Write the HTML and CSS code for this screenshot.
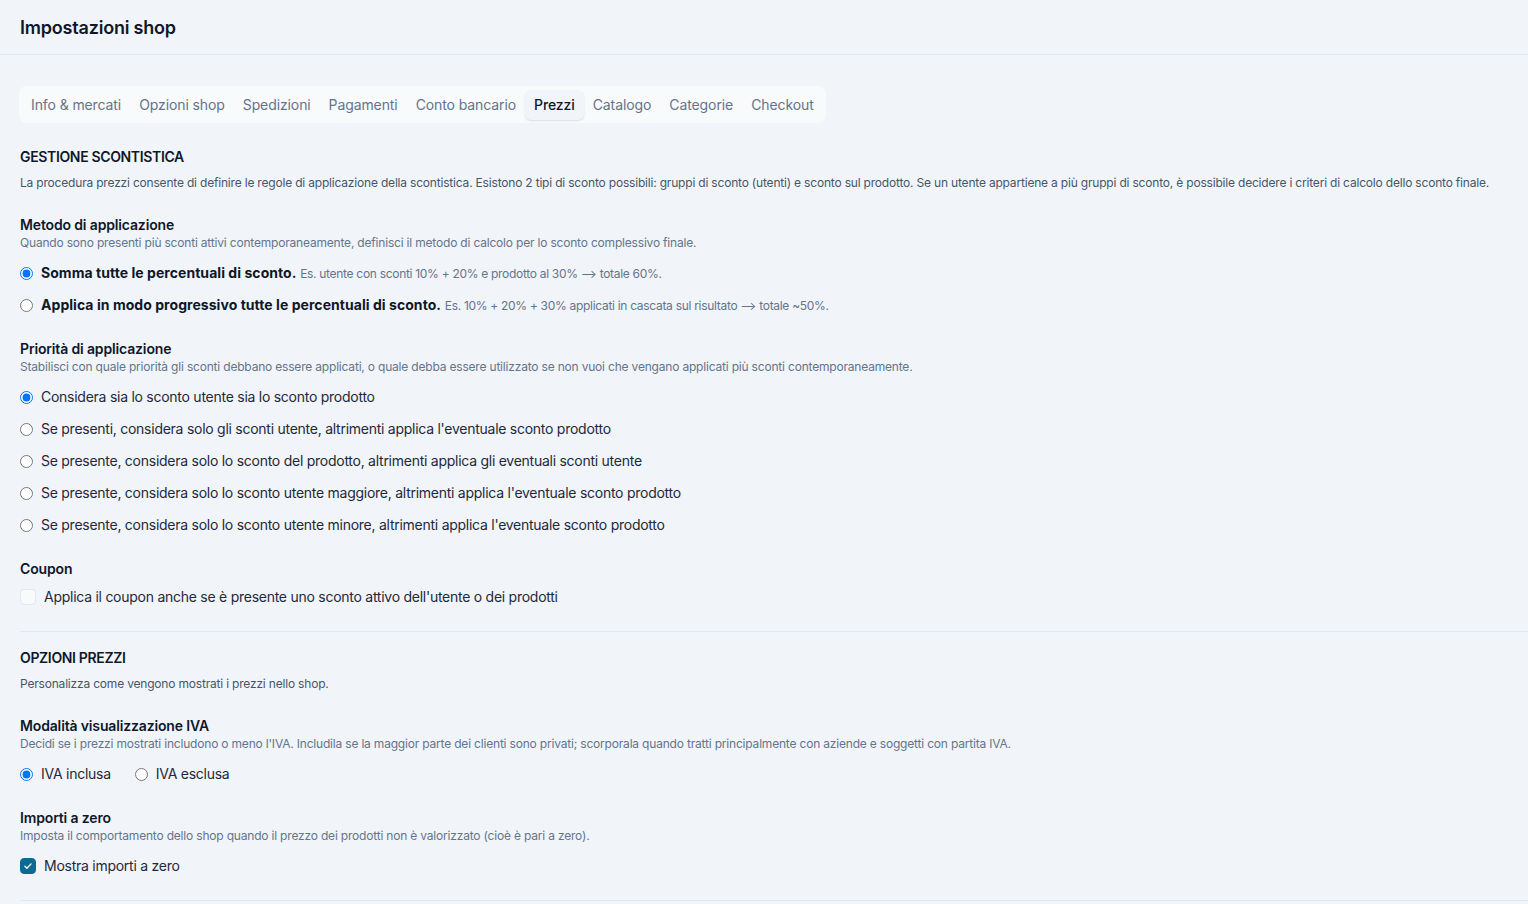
FILE: index.html
```html
<!DOCTYPE html>
<html lang="it">
<head>
<meta charset="utf-8">
<title>Impostazioni shop</title>
<link rel="stylesheet" href="styles.css">
</head>
<body>
<header class="page-header">
  <h1 class="page-title">Impostazioni shop</h1>
</header>
<main class="content">
  <nav class="tabs">
    <span class="tab">Info &amp; mercati</span>
    <span class="tab">Opzioni shop</span>
    <span class="tab">Spedizioni</span>
    <span class="tab">Pagamenti</span>
    <span class="tab">Conto bancario</span>
    <span class="tab tab-active">Prezzi</span>
    <span class="tab">Catalogo</span>
    <span class="tab">Categorie</span>
    <span class="tab">Checkout</span>
  </nav>

  <section class="section">
    <h2 class="section-title">GESTIONE SCONTISTICA</h2>
    <p class="section-desc">La procedura prezzi consente di definire le regole di applicazione della scontistica. Esistono 2 tipi di sconto possibili: gruppi di sconto (utenti) e sconto sul prodotto. Se un utente appartiene a più gruppi di sconto, è possibile decidere i criteri di calcolo dello sconto finale.</p>

    <div class="field">
      <h3 class="field-title">Metodo di applicazione</h3>
      <p class="field-desc">Quando sono presenti più sconti attivi contemporaneamente, definisci il metodo di calcolo per lo sconto complessivo finale.</p>
      <div class="options">
        <label class="option"><input type="radio" name="metodo" checked><span><b>Somma tutte le percentuali di sconto.</b> <small class="hint">Es. utente con sconti 10% + 20% e prodotto al 30% ⟶ totale 60%.</small></span></label>
        <label class="option"><input type="radio" name="metodo"><span><b>Applica in modo progressivo tutte le percentuali di sconto.</b> <small class="hint">Es. 10% + 20% + 30% applicati in cascata sul risultato ⟶ totale ~50%.</small></span></label>
      </div>
    </div>

    <div class="field">
      <h3 class="field-title">Priorità di applicazione</h3>
      <p class="field-desc">Stabilisci con quale priorità gli sconti debbano essere applicati, o quale debba essere utilizzato se non vuoi che vengano applicati più sconti contemporaneamente.</p>
      <div class="options">
        <label class="option"><input type="radio" name="priorita" checked><span>Considera sia lo sconto utente sia lo sconto prodotto</span></label>
        <label class="option"><input type="radio" name="priorita"><span>Se presenti, considera solo gli sconti utente, altrimenti applica l'eventuale sconto prodotto</span></label>
        <label class="option"><input type="radio" name="priorita"><span>Se presente, considera solo lo sconto del prodotto, altrimenti applica gli eventuali sconti utente</span></label>
        <label class="option"><input type="radio" name="priorita"><span>Se presente, considera solo lo sconto utente maggiore, altrimenti applica l'eventuale sconto prodotto</span></label>
        <label class="option"><input type="radio" name="priorita"><span>Se presente, considera solo lo sconto utente minore, altrimenti applica l'eventuale sconto prodotto</span></label>
      </div>
    </div>

    <div class="field">
      <h3 class="field-title">Coupon</h3>
      <div class="options options-tight">
        <label class="option"><span class="check"></span><span>Applica il coupon anche se è presente uno sconto attivo dell'utente o dei prodotti</span></label>
      </div>
    </div>
  </section>

  <hr class="divider">

  <section class="section section-second">
    <h2 class="section-title">OPZIONI PREZZI</h2>
    <p class="section-desc">Personalizza come vengono mostrati i prezzi nello shop.</p>

    <div class="field">
      <h3 class="field-title">Modalità visualizzazione IVA</h3>
      <p class="field-desc">Decidi se i prezzi mostrati includono o meno l'IVA. Includila se la maggior parte dei clienti sono privati; scorporala quando tratti principalmente con aziende e soggetti con partita IVA.</p>
      <div class="options options-inline">
        <label class="option"><input type="radio" name="iva" checked><span>IVA inclusa</span></label>
        <label class="option"><input type="radio" name="iva"><span>IVA esclusa</span></label>
      </div>
    </div>

    <div class="field">
      <h3 class="field-title">Importi a zero</h3>
      <p class="field-desc">Imposta il comportamento dello shop quando il prezzo dei prodotti non è valorizzato (cioè è pari a zero).</p>
      <div class="options">
        <label class="option"><span class="check check-on"><svg viewBox="0 0 16 16" width="16" height="16"><path d="M4.5 8.2l2.3 2.3 4.7-4.9" fill="none" stroke="#fff" stroke-width="1.5" stroke-linecap="round" stroke-linejoin="round"/></svg></span><span>Mostra importi a zero</span></label>
      </div>
    </div>
  </section>

  <hr class="divider">
</main>
</body>
</html>
```

FILE: styles.css
```css
* { box-sizing: border-box; }
html, body {
  margin: 0;
  padding: 0;
  background: #f1f5f9;
  font-family: Inter, "Noto Sans", "Liberation Sans", sans-serif;
  color: #0f172a;
}
.page-header {
  height: 55px;
  padding: 1px 20px 0;
  display: flex;
  align-items: center;
  border-bottom: 1px solid #e2e8f0;
}
.page-title {
  margin: 0;
  font-size: 18px;
  font-weight: 600;
  line-height: 24px;
  letter-spacing: -0.2px;
  color: #0f172a;
}
.content {
  padding: 31px 0 0 20px;
}
.tabs {
  display: inline-flex;
  align-items: center;
  padding: 4px 3px;
  background: #f8fafc;
  border-radius: 8px;
  height: 37px;
  margin-left: -1px;
}
.tab {
  padding: 0 9px;
  height: 30px;
  display: flex;
  align-items: center;
  font-size: 14px;
  color: #64748b;
  border-radius: 6px;
  white-space: nowrap;
  letter-spacing: -0.1px;
}
.tab-active {
  color: #0f172a;
  background: #f1f5f9;
  font-weight: 500;
  box-shadow: 0 1px 2px rgba(15, 23, 42, 0.12);
}
.section {
  padding-top: 24px;
}
.section-second {
  padding-top: 16px;
}
.section-title {
  margin: 0;
  font-size: 14px;
  line-height: 20px;
  font-weight: 600;
  color: #0f172a;
  letter-spacing: -0.35px;
}
.section-desc {
  margin: 8px 0 0;
  font-size: 12px;
  line-height: 16px;
  color: #475569;
  letter-spacing: -0.19px;
}
.field {
  margin-top: 24px;
}
.field-title {
  margin: 0;
  font-size: 14px;
  line-height: 20px;
  font-weight: 600;
  color: #0f172a;
  letter-spacing: -0.15px;
}
.field-desc {
  margin: 0;
  font-size: 12px;
  line-height: 16px;
  color: #64748b;
  letter-spacing: -0.19px;
}
.options {
  margin-top: 12px;
  display: flex;
  flex-direction: column;
  gap: 12px;
}
.options-tight { margin-top: 8px; }
.options-inline {
  flex-direction: row;
  gap: 24px;
}
.option {
  display: flex;
  align-items: center;
  gap: 8px;
  height: 20px;
  font-size: 14px;
  line-height: 20px;
  color: #1e293b;
  letter-spacing: -0.26px;
}
.option input[type="radio"] {
  margin: 0;
  width: 13px;
  height: 13px;
  flex: none;
}
.option b {
  font-weight: 700;
  color: #0f172a;
  letter-spacing: 0.05px;
}
.hint {
  font-size: 12px;
  color: #64748b;
  letter-spacing: -0.3px;
}
.check {
  width: 16px;
  height: 16px;
  flex: none;
  border-radius: 4px;
  border: 1px solid #e2e8f0;
  background: #f8fafc;
  display: flex;
  align-items: center;
  justify-content: center;
}
.check-on {
  background: #0e6a93;
  border-color: #0e6a93;
}
.check-on svg { display: block; }
.divider {
  margin: 24px 0 0;
  border: 0;
  border-top: 1px solid #e2e8f0;
  height: 0;
}
```
